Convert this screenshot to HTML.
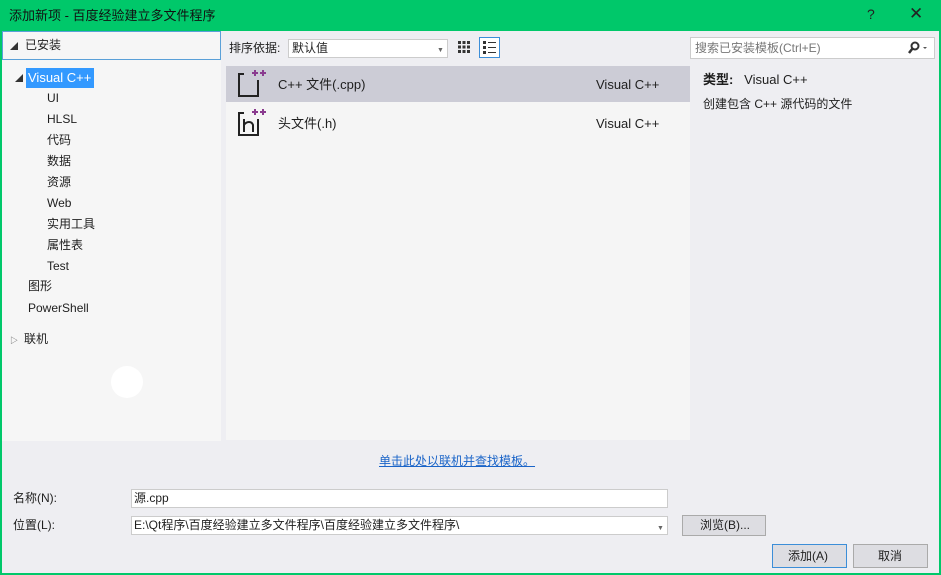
<!DOCTYPE html>
<html><head><meta charset="utf-8"><style>
*{margin:0;padding:0;box-sizing:border-box}
body{width:941px;height:575px;overflow:hidden;background:#00c86a;font-family:"Liberation Sans","Noto Sans CJK SC",sans-serif;font-size:12px;color:#1e1e1e;position:relative}
.a{position:absolute}
#win{left:2px;top:31px;width:937px;height:542px;background:#eeeef2}
.t{white-space:nowrap;line-height:15px}
</style></head><body>
<div class="a t" style="left:9px;top:8px;font-size:13px;color:#111">添加新项 - 百度经验建立多文件程序</div>
<div class="a t" style="left:867px;top:7px;font-size:14px;color:#222">?</div>
<div class="a t" style="left:909px;top:6px;font-size:17px;color:#222">✕</div>
<div id="win" class="a"></div>
<div class="a" style="left:2px;top:31px;width:219px;height:410px;background:#f6f6f6"></div>
<div class="a" style="left:2px;top:31px;width:219px;height:29px;background:#f6f6f6;border:1px solid #5aa0d8"></div>
<div class="a t" style="left:10px;top:39px;font-size:8px;color:#333">◢</div>
<div class="a t" style="left:25px;top:38px">已安装</div>
<div class="a t" style="left:15px;top:71px;font-size:8px;color:#333">◢</div>
<div class="a t" style="left:26px;top:68px;width:68px;height:20px;background:#3399ff;color:#fff;padding:2px 2px;font-size:13px">Visual C++</div>
<div class="a t" style="left:47px;top:91px">UI</div>
<div class="a t" style="left:47px;top:112px">HLSL</div>
<div class="a t" style="left:47px;top:133px">代码</div>
<div class="a t" style="left:47px;top:154px">数据</div>
<div class="a t" style="left:47px;top:175px">资源</div>
<div class="a t" style="left:47px;top:196px">Web</div>
<div class="a t" style="left:47px;top:217px">实用工具</div>
<div class="a t" style="left:47px;top:238px">属性表</div>
<div class="a t" style="left:47px;top:259px">Test</div>
<div class="a t" style="left:28px;top:279px">图形</div>
<div class="a t" style="left:28px;top:301px">PowerShell</div>
<div class="a t" style="left:10px;top:333px;font-size:8px;color:#555">▷</div>
<div class="a t" style="left:24px;top:332px">联机</div>
<div class="a" style="left:111px;top:366px;width:32px;height:32px;border-radius:50%;background:#fff"></div>
<div class="a t" style="left:229px;top:41px">排序依据:</div>
<div class="a" style="left:288px;top:39px;width:160px;height:19px;background:#fff;border:1px solid #ccc"></div>
<div class="a t" style="left:292px;top:41px">默认值</div>
<div class="a t" style="left:437px;top:43px;font-size:7px;color:#666">▼</div>
<svg class="a" style="left:457px;top:40px" width="14" height="14"><g fill="#333"><rect x="1" y="1" width="3" height="3"/><rect x="5.5" y="1" width="3" height="3"/><rect x="10" y="1" width="3" height="3"/><rect x="1" y="5.5" width="3" height="3"/><rect x="5.5" y="5.5" width="3" height="3"/><rect x="10" y="5.5" width="3" height="3"/><rect x="1" y="10" width="3" height="3"/><rect x="5.5" y="10" width="3" height="3"/><rect x="10" y="10" width="3" height="3"/></g></svg>
<div class="a" style="left:479px;top:37px;width:21px;height:21px;border:1px solid #3c8ed8;background:#fff"></div>
<svg class="a" style="left:482px;top:40px" width="15" height="15"><g fill="#333"><rect x="1" y="1" width="3" height="3"/><rect x="1" y="6" width="3" height="3"/><rect x="1" y="11" width="3" height="3"/><rect x="6" y="2" width="8" height="1"/><rect x="6" y="7" width="8" height="1"/><rect x="6" y="12" width="8" height="1"/></g></svg>
<div class="a" style="left:226px;top:66px;width:464px;height:374px;background:#f5f5f5"></div>
<div class="a" style="left:226px;top:66px;width:464px;height:36px;background:#ccccd6"></div>
<svg class="a" style="left:236px;top:68px" width="30" height="30"><path d="M8 6H3V28H22V12" fill="none" stroke="#222" stroke-width="2"/><path d="M16 5h6M19 2v6M24 5h6M27 2v6" stroke="#8a3b8f" stroke-width="2"/></svg>
<div class="a t" style="left:278px;top:77px;font-size:13px">C++ 文件(.cpp)</div>
<div class="a t" style="left:596px;top:77px;font-size:13px">Visual C++</div>
<svg class="a" style="left:236px;top:107px" width="30" height="30"><path d="M8 6H3V28H22V12" fill="none" stroke="#222" stroke-width="2"/><path d="M8 12V25M8 18q2-3 5-3t4 3V25" fill="none" stroke="#222" stroke-width="2"/><path d="M16 5h6M19 2v6M24 5h6M27 2v6" stroke="#8a3b8f" stroke-width="2"/></svg>
<div class="a t" style="left:278px;top:116px;font-size:13px">头文件(.h)</div>
<div class="a t" style="left:596px;top:116px;font-size:13px">Visual C++</div>
<div class="a" style="left:690px;top:37px;width:245px;height:22px;background:#fff;border:1px solid #ccc"></div>
<div class="a t" style="left:695px;top:41px;color:#777">搜索已安装模板(Ctrl+E)</div>
<svg class="a" style="left:907px;top:41px" width="22" height="14"><circle cx="8" cy="5" r="3.5" fill="none" stroke="#333" stroke-width="2"/><path d="M5.5 7.5L2 12" stroke="#333" stroke-width="2.5"/><path d="M16 6h4l-2 2z" fill="#555"/></svg>
<div class="a t" style="left:703px;top:72px;font-size:13px"><b>类型:</b>&nbsp;&nbsp; Visual C++</div>
<div class="a t" style="left:703px;top:97px">创建包含 C++ 源代码的文件</div>
<div class="a t" style="left:379px;top:454px;color:#1a64c8;text-decoration:underline">单击此处以联机并查找模板。</div>
<div class="a t" style="left:13px;top:491px">名称(N):</div>
<div class="a" style="left:131px;top:489px;width:537px;height:19px;background:#fff;border:1px solid #ccc"></div>
<div class="a t" style="left:134px;top:491px">源.cpp</div>
<div class="a t" style="left:13px;top:518px">位置(L):</div>
<div class="a" style="left:131px;top:516px;width:537px;height:19px;background:#fff;border:1px solid #ccc"></div>
<div class="a t" style="left:134px;top:518px">E:\Qt程序\百度经验建立多文件程序\百度经验建立多文件程序\</div>
<div class="a t" style="left:657px;top:521px;font-size:7px;color:#666">▼</div>
<div class="a" style="left:682px;top:515px;width:84px;height:21px;background:#dddde2;border:1px solid #aaa"></div>
<div class="a t" style="left:700px;top:518px">浏览(B)...</div>
<div class="a" style="left:772px;top:544px;width:75px;height:24px;background:#dddde2;border:1px solid #3c8ed8"></div>
<div class="a t" style="left:788px;top:549px">添加(A)</div>
<div class="a" style="left:853px;top:544px;width:75px;height:24px;background:#dddde2;border:1px solid #aaa"></div>
<div class="a t" style="left:878px;top:549px">取消</div>
</body></html>
